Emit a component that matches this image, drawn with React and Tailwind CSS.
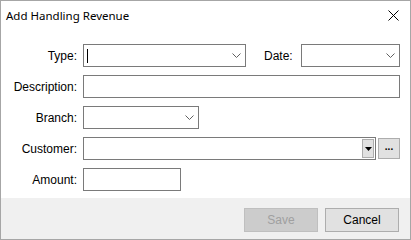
const Chevron = () => (
  <svg width="9" height="5" viewBox="0 0 9 5" className="shrink-0">
    <path d="M0.5 0.5 L4.5 4.5 L8.5 0.5" fill="none" stroke="#606060" strokeWidth="1" />
  </svg>
);

const Row = ({ label, children }) => (
  <div className="flex items-center h-[23px]">
    <div className="w-[77px] text-right pr-px">{label}</div>
    <div className="ml-[5px] flex items-center">{children}</div>
  </div>
);

const ComboBox = ({ width, caret }) => (
  <div
    className="h-[23px] border border-[#7a7a7a] bg-white flex items-center justify-between pl-[3px] pr-[4px]"
    style={{ width }}
  >
    {caret ? <div className="w-px h-[14px] bg-black" /> : <span />}
    <Chevron />
  </div>
);

const TextBox = ({ width }) => (
  <div className="h-[23px] border border-[#7a7a7a] bg-white" style={{ width }} />
);

export default function App() {
  return (
    <div
      className="w-[411px] h-[240px] border border-[#a6a6a6] bg-white flex flex-col text-[12px] text-black"
      style={{ fontFamily: '"Liberation Sans", Arial, sans-serif' }}
    >
      <div className="h-[29px] flex items-center justify-between pl-[5px] pr-[11px]">
        <span className="text-[11.5px] text-[#000]" style={{ fontFamily: '"Noto Sans", sans-serif' }}>
          Add Handling Revenue
        </span>
        <svg width="11" height="11" viewBox="0 0 11 11">
          <path d="M0.5 0.5 L10.5 10.5 M10.5 0.5 L0.5 10.5" stroke="#000" strokeWidth="1" />
        </svg>
      </div>

      <div className="flex-1 flex flex-col gap-[8px] pt-[14px]">
        <Row label="Type:">
          <ComboBox width={163} caret />
          <span className="ml-[18px] w-[37px]">Date:</span>
          <ComboBox width={99} />
        </Row>
        <Row label="Description:">
          <TextBox width={317} />
        </Row>
        <Row label="Branch:">
          <ComboBox width={116} />
        </Row>
        <Row label="Customer:">
          <div className="w-[293px] h-[23px] border border-[#7a7a7a] bg-white flex justify-end p-px">
            <div className="w-[12px] h-full bg-[#e1e1e1] border border-[#adadad] flex items-center justify-center">
              <svg width="7" height="4" viewBox="0 0 7 4">
                <path d="M0 0 L7 0 L3.5 4 Z" fill="#000" />
              </svg>
            </div>
          </div>
          <div className="ml-[2px] w-[22px] h-[21px] bg-[#e1e1e1] border border-[#adadad] flex items-center justify-center">
            <span className="text-[10px] font-bold leading-none -mt-[3px]">...</span>
          </div>
        </Row>
        <Row label="Amount:">
          <TextBox width={98} />
        </Row>
      </div>

      <div className="h-[41px] bg-[#f0f0f0] flex items-center justify-end gap-[7px] pr-[11px] pt-[2px]">
        <div className="w-[74px] h-[24px] bg-[#cccccc] border border-[#bfbfbf] text-[#a0a0a0] flex items-center justify-center">
          Save
        </div>
        <div className="w-[74px] h-[24px] bg-[#e1e1e1] border border-[#adadad] flex items-center justify-center">
          Cancel
        </div>
      </div>
    </div>
  );
}
